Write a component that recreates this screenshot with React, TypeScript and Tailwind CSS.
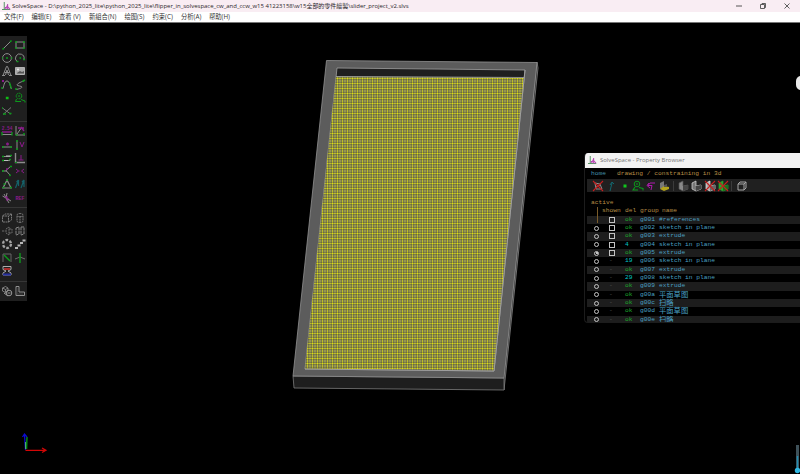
import React from 'react';

const G = '#0c9a1c', W = '#8c8c8c', M = '#8a1a8a', C = '#146068', R = '#a82c2c';

const Icon = ({ children, className = 'h-[12px] w-[12px]' }: { children?: React.ReactNode; className?: string }) => (
  <svg viewBox="0 0 12 12" className={className} fill="none" strokeWidth="1">{children}</svg>
);

const Tiny = ({ x, y, size = 4.5, children }: { x: number; y: number; size?: number; children: string }) => (
  <text x={x} y={y} fontSize={size} fill={M} fontFamily="Liberation Mono, monospace" fontWeight="bold">{children}</text>
);

const drawTools = [
  <Icon><path d="M2 10L10 2" stroke={W} /><path d="M1.5 10.5l1.5-1.5M9 3l1.5-1.5" stroke={G} strokeWidth="1.5" /></Icon>,
  <Icon><path d="M2 3h8v6H2z" stroke={W} /><path d="M1 3h2M9 3h2M1 9h2M9 9h2" stroke={G} strokeWidth="1.6" /></Icon>,
  <Icon><circle cx="6" cy="6" r="4.4" stroke={W} /><path d="M5 6h2M10 6h1.4M1 6h1" stroke={G} strokeWidth="1.6" /></Icon>,
  <Icon><path d="M3 9.5A4.3 4.3 0 1 1 10 7" stroke={W} /><path d="M5.5 6h1.6M9 7.5h2M2.5 9.5h2" stroke={G} strokeWidth="1.6" /></Icon>,
  <Icon><path d="M2 10.5L5.5 1.5h1L10 10.5M3.5 7.5h5M4.5 10L6 5l1.5 5M1 10.5h3M8 10.5h3" stroke={W} /></Icon>,
  <Icon><path d="M1.5 2.5h9v7h-9z" fill="#aaa" stroke="#b0b0b0" /><path d="M3 8l3-2 2 1 2-1v2.5H3z" fill="#555" /><circle cx="4" cy="4.5" r="1" fill="#eee" /></Icon>,
  <Icon><path d="M1.5 10C3 8 3 2 6 2s3 6 4.5 8" stroke={W} /><path d="M1 2h2" stroke={M} strokeWidth="2" /><path d="M1 8v2M8.5 3.5l2 6" stroke={G} strokeWidth="1.3" /></Icon>,
  <Icon><path d="M10 2C6 3 3 5 3 6s5 1 5 2-3 2-6 2.5" stroke={W} /><path d="M8.5 2.5L11 1M1 10h2" stroke={G} strokeWidth="1.5" /></Icon>,
  <Icon><path d="M4.8 6h2.8" stroke="#10bd16" strokeWidth="2.5" /></Icon>,
  <Icon><circle cx="5" cy="4" r="2.8" stroke={G} strokeDasharray="2 .5" /><path d="M4 4h2M2.5 7L1.5 9.5H7M7 7.5l4 1.5v1.5" stroke={G} /></Icon>,
  <Icon><path d="M1.5 3l8 6M10 2.5L2 9.5" stroke="#747474" /><path d="M2 9h3M8 8.5h2.5M1 3h1" stroke={G} strokeWidth="1.5" /></Icon>,
];

const constraintTools = [
  <Icon><Tiny x={0.7} y={5}>2.54</Tiny><path d="M1 7h10" stroke={M} strokeWidth="1.5" /><path d="M1 9.5h10" stroke={W} /><path d="M1 7v3.5M11 7v3.5" stroke={G} strokeWidth="1.3" /></Icon>,
  <Icon><path d="M2 1v9h9M3 9L8 2" stroke={W} /><path d="M4 3h6M7 2l3 4" stroke={M} strokeWidth="1.4" /><path d="M1.5 10h2M9 9h2" stroke={G} strokeWidth="1.6" /></Icon>,
  <Icon><path d="M1 8h10" stroke={W} /><path d="M5 5h3M6.5 3.5v3" stroke={M} strokeWidth="1.5" /><path d="M1 8h2M9 8h2" stroke={G} strokeWidth="1.6" /></Icon>,
  <Icon><path d="M3 1.5v9" stroke={W} /><path d="M3 1v2M3 9v2" stroke={G} strokeWidth="1.5" /><path d="M6 3l2 5 2-5" stroke={M} /></Icon>,
  <Icon><path d="M2 4.5h8M1 8.5h8" stroke={W} /><path d="M5 4h4M3 8.5h4" stroke="#c0c0c0" /><path d="M1 4.5h2M9 3.5h2M1 8.5h2M8 7.5h2" stroke={G} strokeWidth="1.5" /></Icon>,
  <Icon><path d="M1.5 1v9.5H11" stroke={W} strokeWidth="1.4" /><path d="M7 3v5M4.5 8h5" stroke={M} /><path d="M1 10.5h2" stroke={G} /></Icon>,
  <Icon><path d="M10 1L5 5.5 9 10M1 6h5" stroke={W} /><path d="M1 6h2M9 1.5h2M8.5 9.5l1 1.5" stroke={G} strokeWidth="1.5" /><path d="M5 4h2" stroke={M} strokeWidth="1.5" /></Icon>,
  <Icon><path d="M2 4l2.5 2L2 8M4.5 6h1M10 4L7.5 6 10 8" stroke={M} /></Icon>,
  <Icon><path d="M6 2l4 8H2z" stroke={W} strokeWidth="1.2" /><path d="M5 2h2M1.5 9.5h2M9 9.5h2M2.5 6h2" stroke={G} strokeWidth="1.7" /></Icon>,
  <Icon><path d="M1.5 10l3-8v6M7 10l3-8v7M2.5 4l2-2M8 4l2-2" stroke={C} strokeWidth="1.2" /></Icon>,
  <Icon><path d="M1.5 4L10 9M6 1l-1 5 3 5M3 2l4 7" stroke={W} /><path d="M3.5 4.5l5 3M6 4v5" stroke={M} /></Icon>,
  <Icon><Tiny x={1.5} y={7.5} size={5}>REF</Tiny></Icon>,
];

const groupTools = [
  <Icon><path d="M1.5 4h6v6h-6zM1.5 4l2.5-2h6.5l-3 2M10.5 2v6l-3 2" stroke="#7a7a7a" strokeDasharray="2 .6" /></Icon>,
  <Icon><path d="M3 3c0-2 6-2 6 0v6c0 2-6 2-6 0zM3 4c1 1 5 1 6 0M6 4v6" stroke="#747474" strokeDasharray="2 .6" /></Icon>,
  <Icon><path d="M1 6h3M5 4l3-2v8L5 8zM8 4h3v4H8" stroke="#6c6c6c" strokeDasharray="2 .7" /></Icon>,
  <Icon><path d="M2 3l3-1v7l-3 1zM7 2h3v7l-3 1z" stroke="#868686" strokeDasharray="3 .6" /></Icon>,
  <Icon><circle cx="6" cy="6" r="4" stroke="#a4a4a4" strokeWidth="2.3" strokeDasharray="2.7 1.5" /></Icon>,
  <Icon><path d="M1 10h3M3.5 7.5h3M6 5h3M8.5 2.5h3" stroke="#b8b8b8" strokeWidth="1.9" /></Icon>,
  <Icon><path d="M2 10V2h8v8" stroke="#666" /><path d="M3 3l6 6" stroke={G} strokeWidth="1.4" /></Icon>,
  <Icon><path d="M1 7l5-2 5 2" stroke="#6c6c6c" /><path d="M6 1v10" stroke={G} strokeWidth="1.4" /></Icon>,
  <Icon><path d="M2 1.5h8v3L7 6l3 2v2H2V8l3-2-3-1.5z" stroke="#aaa" /><path d="M3 4h6" stroke={R} strokeWidth="2" /><path d="M2 9.5h8" stroke="#2630a0" strokeWidth="2" /></Icon>,
];

const viewTools = [
  <Icon><path d="M1.5 3l3-1.5L7 3v3L4.5 7.5 1.5 6zM1.5 3l3 1.5L7 3M4.5 4.5v3" stroke="#929292" strokeWidth=".8" /><circle cx="8" cy="8" r="2.8" stroke="#999" /><path d="M3 8l4 3M6.5 8h3" stroke="#999" /></Icon>,
  <Icon><path d="M2 1.5h3v5.5h5.5v3.5H2z" stroke="#909090" /><path d="M3 3v6h6" stroke="#444" /></Icon>,
];

const ToolGroup = ({ items, last = false }: { items: React.ReactNode[]; last?: boolean }) => (
  <div className={`grid auto-rows-[13.3px] grid-cols-[13.5px_13.5px] place-items-center pt-[2px] ${last ? '' : 'mb-[0.8px] border-b border-[#363636] pb-[3px]'}`}>
    {items.map((item, i) => <React.Fragment key={i}>{item}</React.Fragment>)}
  </div>
);

const AppLogo = () => (
  <Icon className="h-[9px] w-[9px] shrink-0">
    <path d="M3 0v10M0 10h11" stroke="#4a8a58" strokeWidth="1.2" />
    <path d="M4.5 9V6.5M7.5 10V2.5M7.5 4L5 9M7.5 6l3 3.5" stroke="#b845b5" strokeWidth="1.4" />
  </Icon>
);

const Model = () => (
  <svg className="absolute left-0 top-0 h-full w-full" viewBox="0 23 800 451">
    <defs>
      <pattern id="mesh" width="5" height="5" patternUnits="userSpaceOnUse" patternTransform="translate(337 78)">
        <rect width="5" height="5" fill="#6e6e3c" />
        <path d="M0 3h5M3 0v5" stroke="#888860" />
        <path d="M0 .5h5M.5 0v5" stroke="#a5a528" />
        <path d="M0 .5h1M2.5 .5h1M0 3h1M2.5 3h1" stroke="#d8d828" />
      </pattern>
    </defs>
    <path d="M537 62l1 6-34 322-1-12z" fill="#282828" stroke="#858585" strokeWidth=".8" />
    <path d="M293 376l211 2v12l-210-2z" fill="#1e1e1e" stroke="#7c7c7c" strokeWidth=".8" />
    <path d="M326.500 60.500L537 62.500 504 378l-211-2z" fill="#5c5c5c" stroke="#929292" strokeWidth=".8" />
    <path d="M337 68l188 2-31 301-189-2z" fill="#1f1f1f" stroke="#a0a0a0" strokeWidth=".8" />
    <path d="M336 76.500l188 1-30 293-189-2z" fill="url(#mesh)" />
    <path d="M336 76.500l188 1" stroke="#aaa" strokeWidth=".8" />
    <path d="M305 369l189 2 31-301" fill="none" stroke="#a0a0a0" strokeWidth=".9" />
    <path d="M26.500 449l.5-12" stroke="#078b15" strokeWidth="1.5" />
    <path d="M25.500 450l-1-15M22.500 437l2-3 2.500 3" fill="none" stroke="#0b0bd0" strokeWidth="1.3" />
    <path d="M25.500 450.300H46M42 448l4 2.300-4 2.300" fill="none" stroke="#d40606" strokeWidth="1.2" />
    <path d="M25.500 449v-7" stroke="#63c777" strokeWidth=".8" />
    <rect x="796" y="76" width="12" height="14" rx="5" fill="#eaeaea" />
    <path d="M797.500 445v24" stroke="#3e5159" strokeWidth="3" />
    <path d="M797.500 456v14" stroke="#248baf" strokeWidth="1.5" />
    <circle cx="797.500" cy="470.500" r="2.7" fill="#30b7e2" />
  </svg>
);

const menus = ['文件(F)', '编辑(E)', '查看 (V)', '新組合(N)', '绘图(S)', '约束(C)', '分析(A)', '帮助(H)'];
const menuWidths = ['w-[27.5px]', 'w-[27.5px]', 'w-[30px]', 'w-[35.5px]', 'w-[28px]', 'w-[28.5px]', 'w-[28px]', 'w-[28px]'];

const rows = [
  ['', 'box', 'ok', 'g001', '#references'], ['o', 'box', 'ok', 'g002', 'sketch in plane'],
  ['o', 'box', 'ok', 'g003', 'extrude'], ['o', 'box', '4', 'g004', 'sketch in plane'],
  ['on', 'box', 'ok', 'g005', 'extrude'], ['o', '-', '19', 'g006', 'sketch in plane'],
  ['o', '-', 'ok', 'g007', 'extrude'], ['o', '-', '29', 'g008', 'sketch in plane'],
  ['o', '-', 'ok', 'g009', 'extrude'], ['o', '-', 'ok', 'g00a', '平面草图'],
  ['o', '-', 'ok', 'g00c', '扫略'], ['o', '-', 'ok', 'g00d', '平面草图'], ['o', '-', 'ok', 'g00e', '扫略'],
];

const Cube = ({ front, side, line = '#999' }: { front: string; side: string; line?: string }) => (
  <><path d="M2 3l4-2v5l5-1v4l-5 2-4-2z" fill={front} stroke={line} strokeWidth=".7" /><path d="M6 6l5-1v4l-5 2z" fill={side} /></>
);
const Cross = () => <path d="M1 1l10 10M11 1L1 11" stroke="#c51e1e" strokeWidth="1.1" />;
const Divider = () => <span className="h-[10px] w-px bg-[#3b3b3b]" />;

const PropertyBrowser = () => (
  <section className="absolute left-[584px] top-[130px] h-[170px] w-[216px] overflow-hidden rounded-l-[4px] border-b border-l border-[#1c1c1c] bg-black">
    <header className="flex h-[15px] items-center gap-[3px] bg-[#f3f3f3] pl-[3px] font-['Open_Sans',sans-serif] text-[5.95px] text-[#747474]">
      <AppLogo /><span>SolveSpace - Property Browser</span>
    </header>
    <div className="font-['Liberation_Mono','Noto_Sans_CJK_SC',monospace] text-[6.22px]">
      <div className="flex h-[11px] items-center gap-[11px] pl-[6px]">
        <span className="text-[#4391ab]">home</span><span className="whitespace-pre text-[#b98f46]">drawing / constraining in 3d</span>
      </div>
      <div className="ml-[2px] flex h-[13px] items-center bg-[#202020] pl-[5px]">
        <div className="flex items-center gap-[1.3px]">
          <Icon><path d="M3 3l5 1 2 5H4zM4 7l4-2" stroke="#8d8d8d" /><Cross /></Icon>
          <Icon><path d="M5 11l2-8M5 5l2-3 2 2" stroke="#12666d" /></Icon>
          <Icon><path d="M4.5 6h3" stroke="#10c51c" strokeWidth="3" /></Icon>
          <Icon><circle cx="5" cy="4" r="2.8" stroke={G} /><path d="M4 4h2M3 7l-2 3h5M7 7.5l4 1v2" stroke={G} strokeWidth="1.1" /></Icon>
          <Icon><path d="M10 3H5L3 5.5h4L6 10M4 3l-2 2.5L5 8" stroke="#ad1aad" /></Icon>
          <Icon><path d="M2 3l4-2v6l-4 2z" fill="#777" /><path d="M2 9l4-3 5 1v2l-5 2z" fill="#b4a41c" /><path d="M6 5l3-1v3H6z" fill="#555" /></Icon>
        </div>
        <div className="ml-[3px] flex items-center gap-[1.5px]">
          <Divider />
          <span className="ml-[1px]"><Icon><Cube front="#888" side="#444" line="#555" /></Icon></span>
          <Icon><Cube front="#777" side="#444" line="#ddd" /></Icon>
          <Icon><Cube front="#aaa" side="#666" line="#eee" /><Cross /></Icon>
          <Icon><Cube front="#28a72d" side="#1a701b" line="#28a72d" /><Cross /></Icon>
          <Divider />
          <span className="ml-[3px]"><Icon><path d="M2 4h6v6H2zM2 4l2-2h6v6l-2 2M8 4l2-2" stroke="#a5a5a5" /></Icon></span>
        </div>
      </div>
      <div className="relative pt-[7px] text-[#b98f46]">
        <div className="h-[8.3px] pl-[6px] leading-[8.3px]">active</div>
        <div className="grid h-[8.3px] grid-cols-[22px_15px_22px_1fr] pl-[17px] leading-[8.3px]">
          <span>shown</span><span className="pl-[1px]">del</span><span className="pl-[1px]">group</span><span className="pl-[1px]">name</span>
        </div>
        <span className="absolute left-[12px] top-[15px] h-[16px] w-px bg-[#795b29]" />
        {rows.map(([active, shown, status, id, name], i) => (
          <div key={id} className={`ml-[2px] grid h-[8.33px] grid-cols-[19px_19px_15px_19px_1fr] items-center leading-[8px] text-[#4ba0c4] ${i % 2 === 0 ? 'bg-[#1d1d1d]' : ''}`}>
            <span className="flex justify-center">
              {active && <span className="flex h-[5px] w-[5px] items-center justify-center rounded-full border border-[#c4c4c4]">{active === 'on' && <i className="h-[2px] w-[2px] bg-[#c4c4c4]" />}</span>}
            </span>
            <span className="flex pl-[3px]">{shown === 'box' ? <span className="h-[6px] w-[6px] border border-[#c3c3c3]" /> : <span className="text-[#555]">-</span>}</span>
            <span className={status === 'ok' ? 'text-[#1cad2c]' : 'text-[#00c4c4]'}>{status}</span>
            <span>{id}</span>
            <span className={name.charCodeAt(0) > 255 ? 'text-[7.3px]' : ''}>{name}</span>
          </div>
        ))}
      </div>
    </div>
  </section>
);

export default function App() {
  return (
    <div className="flex h-[474px] w-[800px] flex-col overflow-hidden bg-black font-['Open_Sans','Noto_Sans_CJK_SC',sans-serif]">
      <header className="flex h-[12px] shrink-0 items-center bg-[#f9edf3] pl-[2px] text-[#292629]">
        <AppLogo />
        <span className="ml-[1px] w-[425px] whitespace-nowrap text-[5.97px] leading-[12px]">SolveSpace - D:\python_2025_lite\python_2025_lite\flipper_in_solvespace_cw_and_ccw_w15 41223158\w15全部的零件繪製\slider_project_v2.slvs</span>
        <div className="ml-auto flex items-center gap-[18px] pr-[10px]">
          <Icon className="h-[6px] w-[6px]"><path d="M0 6h12" stroke="#444" strokeWidth="1.8" /></Icon>
          <Icon className="h-[6px] w-[6px]"><path d="M1 3h8v8H1zM4 3V1h7v8H9" stroke="#444" strokeWidth="1.7" /></Icon>
          <Icon className="h-[6px] w-[6px]"><path d="M1 1l10 10M11 1L1 11" stroke="#444" strokeWidth="1.7" /></Icon>
        </div>
      </header>
      <nav className="flex h-[10px] shrink-0 items-center bg-white pl-[4px] text-[6.3px] leading-[10px] text-[#333]">
        {menus.map((item, i) => <span key={item} className={`whitespace-nowrap ${menuWidths[i]}`}>{item}</span>)}
      </nav>
      <main className="relative min-h-0 grow border-t border-[#777] bg-black">
        <Model />
        <aside className="absolute left-0 top-[13px] h-[265px] w-[27px] bg-[#1f1f1f]">
          <ToolGroup items={drawTools} />
          <ToolGroup items={constraintTools} />
          <ToolGroup items={groupTools} />
          <ToolGroup items={viewTools} last />
        </aside>
        <PropertyBrowser />
      </main>
    </div>
  );
}
